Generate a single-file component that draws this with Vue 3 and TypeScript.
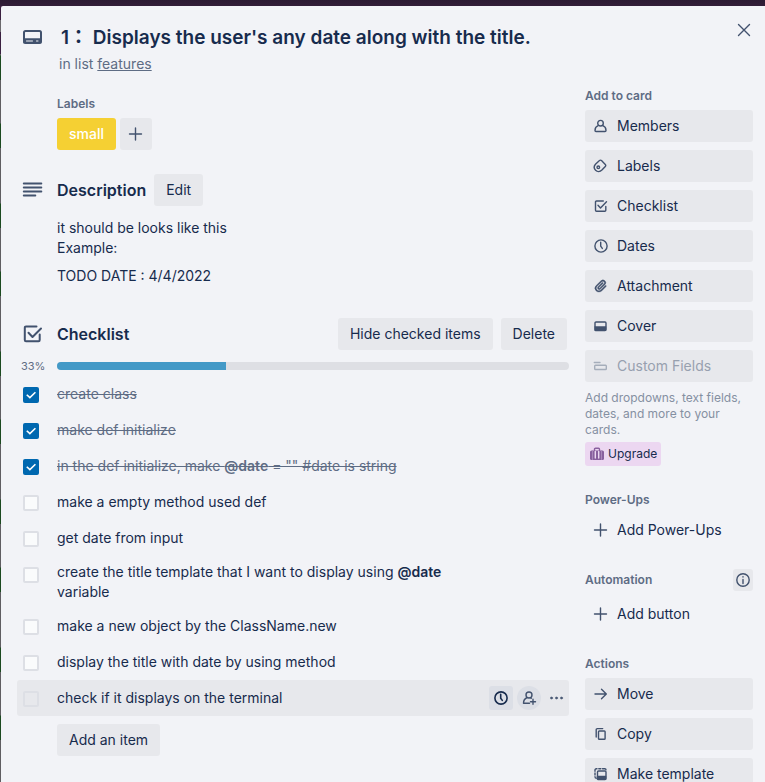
<script setup lang="ts">
import { ref, computed } from 'vue'

interface TextPart {
  text: string
  bold?: boolean
}

interface CheckItem {
  id: number
  parts: TextPart[]
  done: boolean
  active?: boolean
}

interface SideAction {
  icon: string
  label: string
  disabled?: boolean
}

const items = ref<CheckItem[]>([
  { id: 1, done: true, parts: [{ text: 'create class' }] },
  { id: 2, done: true, parts: [{ text: 'make def initialize' }] },
  {
    id: 3,
    done: true,
    parts: [
      { text: 'in the def initialize, make ' },
      { text: '@date', bold: true },
      { text: ' = "" #date is string' },
    ],
  },
  { id: 4, done: false, parts: [{ text: 'make a empty method used def' }] },
  { id: 5, done: false, parts: [{ text: 'get date from input' }] },
  {
    id: 6,
    done: false,
    parts: [
      { text: 'create the title template that I want to display using ' },
      { text: '@date', bold: true },
      { text: ' variable' },
    ],
  },
  { id: 7, done: false, parts: [{ text: 'make a new object by the ClassName.new' }] },
  { id: 8, done: false, parts: [{ text: 'display the title with date by using method' }] },
  { id: 9, done: false, active: true, parts: [{ text: 'check if it displays on the terminal' }] },
])

const percent = computed(() =>
  Math.round((items.value.filter((item) => item.done).length / items.value.length) * 100),
)

const addActions: SideAction[] = [
  { icon: 'member', label: 'Members' },
  { icon: 'label', label: 'Labels' },
  { icon: 'check', label: 'Checklist' },
  { icon: 'clock', label: 'Dates' },
  { icon: 'attachment', label: 'Attachment' },
  { icon: 'cover', label: 'Cover' },
  { icon: 'fields', label: 'Custom Fields', disabled: true },
]

const cardActions: SideAction[] = [
  { icon: 'arrow', label: 'Move' },
  { icon: 'copy', label: 'Copy' },
  { icon: 'template', label: 'Make template' },
]
</script>

<template>
  <div class="board">
    <svg class="defs" aria-hidden="true">
      <symbol id="i-member" viewBox="0 0 16 16">
        <circle cx="7.5" cy="5.2" r="2.8" />
        <path d="M5.1 7.6C3.2 8.4 2 10.3 2 12.4c0 .7.4 1.1 1 1.1h9c.6 0 1-.4 1-1.1 0-2.1-1.2-4-3.1-4.8" />
      </symbol>
      <symbol id="i-label" viewBox="0 0 16 16">
        <path d="M6.5 2.6c.6-.6 1.4-.6 2 0l3.8 3.9c.6.6.6 1.3 0 1.9L8.9 12c-1.9 1.9-4.6 1.9-6.3.2-1.7-1.7-1.7-4.3.1-6.2z" />
        <circle cx="5.3" cy="9.3" r="1.3" />
      </symbol>
      <symbol id="i-check" viewBox="0 0 16 16">
        <path d="M10.3 3H3.5c-.6 0-1 .4-1 1v8.3c0 .6.4 1 1 1h8.3c.6 0 1-.4 1-1V8.5" />
        <path d="M5 7.2l2.500 2.800L13.500 3.800" />
      </symbol>
      <symbol id="i-clock" viewBox="0 0 16 16">
        <circle cx="8" cy="8" r="6.1" />
        <path d="M7.7 4.3v3.9l1.6 2.2" />
      </symbol>
      <symbol id="i-attachment" viewBox="0 0 24 24">
        <path class="solid" d="M11.643 17.965c-1.53 1.495-4.016 1.496-5.542.004a3.773 3.773 0 0 1 .002-5.412l7.147-6.985a2.316 2.316 0 0 1 3.233-.003c.893.873.895 2.282.004 3.153l-6.703 6.55a.653.653 0 0 1-.914-.008.62.62 0 0 1 0-.902l6.229-6.087a.941.941 0 0 0 0-1.353.995.995 0 0 0-1.384 0l-6.23 6.087a2.502 2.502 0 0 0 0 3.607 2.643 2.643 0 0 0 3.683.009l6.703-6.55a4.074 4.074 0 0 0-.003-5.859 4.306 4.306 0 0 0-6.002.003l-7.148 6.985a5.655 5.655 0 0 0-.001 8.118c2.29 2.239 6.015 2.238 8.31-.005l6.686-6.533a.941.941 0 0 0 0-1.353.995.995 0 0 0-1.384 0z" />
      </symbol>
      <symbol id="i-cover" viewBox="0 0 16 16">
        <rect x="2" y="4" width="11" height="8.5" rx="1" />
        <path class="solid" d="M2 8.500h11v4H2z" />
      </symbol>
      <symbol id="i-fields" viewBox="0 0 16 16">
        <path d="M1.300 4.500H7" />
        <rect x="1.7" y="7.3" width="11.6" height="4.2" rx=".8" />
      </symbol>
      <symbol id="i-plus" viewBox="0 0 16 16">
        <path d="M7.500 2v12M1.500 8h12" />
      </symbol>
      <symbol id="i-arrow" viewBox="0 0 16 16">
        <path d="M2 8h11M8.500 3.200L13.300 8l-4.800 4.800" />
      </symbol>
      <symbol id="i-copy" viewBox="0 0 16 16">
        <rect x="5.5" y="5" width="6.600" height="8.300" rx=".8" />
        <path d="M3.200 11V3.700c0-.7.4-1.100 1.100-1.100h5.400" />
      </symbol>
      <symbol id="i-template" viewBox="0 0 16 16">
        <path d="M2 5.200V4c0-.7.5-1.200 1.200-1.200h.8M5.800 2.800h2M9.500 2.800h2.300c.7 0 1.200.4 1.200 1M2 7v2M2 10.800c0 .9.4 1.400 1.200 1.400" />
        <rect x="4.5" y="5" width="8.500" height="8.500" rx="1" />
        <path class="solid" d="M4.500 10h8.500v3.500h-8.500z" />
      </symbol>
      <symbol id="i-card" viewBox="0 0 24 24">
        <rect x="3" y="6" width="17" height="12" rx="1.5" />
        <path class="solid" d="M3 13.500h17V18H3z" />
        <path class="cut" d="M5.500 16h6M15.500 16h1.500" />
      </symbol>
      <symbol id="i-lines" viewBox="0 0 24 24">
        <path d="M2.800 5.500h17.500M2.800 9.500h17.500M2.800 13.500h17.500M2.800 17.500h11.500" />
      </symbol>
      <symbol id="i-bigcheck" viewBox="0 0 24 24">
        <path d="M15.500 4.500H5c-.8 0-1.200.4-1.200 1.200V18c0 .8.4 1.200 1.200 1.200h12.500c.8 0 1.200-.4 1.200-1.200v-5.500" />
        <path d="M7.500 10.800l4 4.200L20 6.500" />
      </symbol>
      <symbol id="i-close" viewBox="0 0 16 16">
        <path d="M2.500 2.500l11 11M13.500 2.500l-11 11" />
      </symbol>
      <symbol id="i-assign" viewBox="0 0 16 16">
        <circle cx="8" cy="5" r="3" />
        <path d="M6 7.500C3.800 8.600 2.500 10.600 2.500 13.200H8.500M9.500 7.800l.7.500M12 9.300v5M9.500 11.800h5" />
      </symbol>
      <symbol id="i-dots" viewBox="0 0 16 16">
        <circle class="solid" cx="2.500" cy="8" r="1.100" />
        <circle class="solid" cx="7.500" cy="8" r="1.100" />
        <circle class="solid" cx="12.500" cy="8" r="1.100" />
      </symbol>
      <symbol id="i-info" viewBox="0 0 16 16">
        <circle cx="8" cy="8" r="6.2" />
        <path d="M8 7.500v4M8 4.700v.4" />
      </symbol>
      <symbol id="i-case" viewBox="0 0 16 16">
        <rect class="leather" x="1" y="4.5" width="14" height="9.500" rx="1.5" />
        <path d="M5.500 4.500V3.200c0-.6.4-1 1-1h3c.6 0 1 .4 1 1v1.300" />
        <path class="seam" d="M6.300 5.500v6.500M9.700 5.500v6.500" />
        <path class="strap" d="M3.500 5v8.500M12.500 5v8.500" />
      </symbol>
    </svg>

    <div class="dialog" role="dialog" aria-labelledby="card-title">
      <header class="top">
        <svg class="icon big"><use href="#i-card" /></svg>
        <div class="heading">
          <h1 id="card-title">1： Displays the user's any date along with the title.</h1>
          <p>in list <a href="#features">features</a></p>
        </div>
        <button class="close" type="button" aria-label="Close">
          <svg class="icon"><use href="#i-close" /></svg>
        </button>
      </header>

      <div class="columns">
        <main class="content">
          <section class="labels">
            <h3>Labels</h3>
            <div class="label-row">
              <button class="chip" type="button">small</button>
              <button class="button square" type="button" aria-label="Add label">
                <svg class="icon"><use href="#i-plus" /></svg>
              </button>
            </div>
          </section>

          <section class="description">
            <div class="section-head">
              <svg class="icon big"><use href="#i-lines" /></svg>
              <h2>Description</h2>
              <button class="button" type="button">Edit</button>
            </div>
            <div class="prose">
              <p>it should be looks like this<br />Example:</p>
              <p>TODO DATE : 4/4/2022</p>
            </div>
          </section>

          <section class="checklist">
            <div class="section-head">
              <svg class="icon big"><use href="#i-bigcheck" /></svg>
              <h2>Checklist</h2>
              <div class="head-actions">
                <button class="button" type="button">Hide checked items</button>
                <button class="button" type="button">Delete</button>
              </div>
            </div>
            <div class="progress">
              <span class="percent">{{ percent }}%</span>
              <div class="track">
                <div class="fill" :style="{ width: percent + '%' }"></div>
              </div>
            </div>
            <ul>
              <li v-for="item in items" :key="item.id" :class="{ done: item.done, active: item.active }">
                <input :id="'item-' + item.id" v-model="item.done" type="checkbox" />
                <label :for="'item-' + item.id">
                  <span>
                    <template v-for="(part, i) in item.parts" :key="i">
                      <strong v-if="part.bold">{{ part.text }}</strong>
                      <template v-else>{{ part.text }}</template>
                    </template>
                  </span>
                </label>
                <div v-if="item.active" class="item-tools">
                  <button class="tool due" type="button" aria-label="Due date">
                    <svg class="icon"><use href="#i-clock" /></svg>
                  </button>
                  <button class="tool round" type="button" aria-label="Assign">
                    <svg class="icon"><use href="#i-assign" /></svg>
                  </button>
                  <button class="tool plain" type="button" aria-label="More">
                    <svg class="icon"><use href="#i-dots" /></svg>
                  </button>
                </div>
              </li>
            </ul>
            <button class="button add-item" type="button">Add an item</button>
          </section>
        </main>

        <aside class="sidebar">
          <section>
            <h3>Add to card</h3>
            <div class="stack">
              <button
                v-for="action in addActions"
                :key="action.label"
                class="side-button"
                type="button"
                :disabled="action.disabled"
              >
                <svg class="icon"><use :href="'#i-' + action.icon" /></svg>{{ action.label }}
              </button>
            </div>
            <p class="hint">Add dropdowns, text fields, dates, and more to your cards.</p>
            <button class="upgrade" type="button">
              <svg class="icon"><use href="#i-case" /></svg>Upgrade
            </button>
          </section>

          <section>
            <h3>Power-Ups</h3>
            <button class="side-button ghost" type="button">
              <svg class="icon"><use href="#i-plus" /></svg>Add Power-Ups
            </button>
          </section>

          <section>
            <div class="automation-head">
              <h3>Automation</h3>
              <button class="info" type="button" aria-label="About automation">
                <svg class="icon"><use href="#i-info" /></svg>
              </button>
            </div>
            <button class="side-button ghost" type="button">
              <svg class="icon"><use href="#i-plus" /></svg>Add button
            </button>
          </section>

          <section>
            <h3>Actions</h3>
            <div class="stack">
              <button v-for="action in cardActions" :key="action.label" class="side-button" type="button">
                <svg class="icon"><use :href="'#i-' + action.icon" /></svg>{{ action.label }}
              </button>
            </div>
          </section>
        </aside>
      </div>
    </div>
  </div>
</template>

<style>
body {
  margin: 0;
  overflow: hidden;
}
</style>

<style scoped>
.board {
  box-sizing: border-box;
  height: 100vh;
  overflow: hidden;
  padding: 6px 0 0 1px;
  background:
    linear-gradient(#2b1a32, #321d38) 0 0 / 100% 6px no-repeat,
    linear-gradient(#3a1f40 20px, #6b696d 20px 32px, #3a1f40 32px 54px, transparent 54px),
    repeating-linear-gradient(#5f5d61 0 55px, #1c4a20 56px 80px, #5f5d61 80px 123px, #1c4a20 124px 148px);
  background-color: #5f5d61;
  font-family: Inter, "Noto Sans CJK JP", sans-serif;
  font-size: 14px;
  line-height: 20px;
  color: #172b4d;
}

.defs {
  position: absolute;
  width: 0;
  height: 0;
}

.dialog {
  box-sizing: border-box;
  min-height: 100%;
  padding: 16px 12px 24px 16px;
  border-radius: 2px 0 0 0;
  background: #f2f3f7;
}

h1,
h2,
h3,
p,
ul {
  margin: 0;
  padding: 0;
}

button {
  border: 0;
  padding: 0;
  font: inherit;
  color: inherit;
  cursor: pointer;
}

.icon {
  display: block;
  flex: none;
  width: 16px;
  height: 16px;
  fill: none;
  stroke: #42526e;
  stroke-width: 1.4;
  stroke-linecap: round;
  stroke-linejoin: round;
}

.icon.big {
  width: 24px;
  height: 24px;
  margin: 0 12px 0 4px;
  stroke-width: 2;
}

.solid {
  fill: #42526e;
  stroke-width: 0.5px;
}

.cut {
  stroke: #f2f3f7;
  stroke-width: 1px;
}

.top {
  display: flex;
  align-items: flex-start;
}

.top .big {
  margin-top: 3px;
}

.heading {
  flex: 1;
  padding-top: 4px;
}

h1 {
  padding-left: 4px;
  font-size: 19px;
  line-height: 24px;
  font-weight: 600;
}

.heading p {
  padding: 4px 0 0 2px;
  color: #5e6c84;
}

.heading a {
  color: inherit;
}

.close {
  display: flex;
  padding: 0 1px;
  background: none;
}

.columns {
  display: flex;
  align-items: flex-start;
  gap: 16px;
  padding-top: 12px;
}

.content {
  flex: 1;
  min-width: 0;
}

h3 {
  font-size: 12px;
  line-height: 20px;
  font-weight: 600;
  color: #5e6c84;
}

.labels {
  padding: 8px 0 0 40px;
}

.label-row {
  display: flex;
  gap: 4px;
  padding-top: 4px;
}

.chip,
.button {
  height: 32px;
  padding: 0 12px;
  border-radius: 3px;
}

.chip {
  background: #f5d033;
  color: #fff;
  font-weight: 500;
}

.button {
  background: #e7e8ec;
}

.square {
  padding: 0 8px;
}

.section-head {
  display: flex;
  align-items: center;
}

h2 {
  font-size: 16px;
  line-height: 20px;
  font-weight: 600;
}

.description {
  padding-top: 24px;
}

.description .button {
  margin-left: 8px;
}

.prose {
  display: grid;
  gap: 8px;
  padding: 12px 0 0 40px;
}

.checklist {
  padding-top: 32px;
}

.head-actions {
  display: flex;
  gap: 8px;
  margin-left: auto;
  padding-right: 2px;
}

.progress {
  display: flex;
  align-items: center;
  padding: 8px 0 2px;
}

.percent {
  width: 40px;
  box-sizing: border-box;
  padding-left: 4px;
  font-size: 11px;
  line-height: 16px;
  color: #5e6c84;
}

.track {
  flex: 1;
  height: 8px;
  overflow: hidden;
  border-radius: 4px;
  background: #dedfe4;
}

.fill {
  height: 100%;
  background: #4399c7;
}

li {
  display: flex;
  align-items: flex-start;
  border-radius: 3px;
}

li.active {
  background: #e7e8ec;
}

li input {
  appearance: none;
  flex: none;
  box-sizing: border-box;
  display: grid;
  place-items: center;
  width: 16px;
  height: 16px;
  margin: 11px 18px 0 6px;
  border: 2px solid #dddfe5;
  border-radius: 2px;
  background: #fafbfc;
}

li.active input {
  background: transparent;
}

li input:checked {
  border: 0;
  background: #0068b0;
}

li input:checked::after {
  content: "";
  width: 16px;
  height: 16px;
  background: #fff;
  clip-path: polygon(20% 52%, 27% 45%, 43% 60%, 74% 29%, 81% 36%, 43% 74%);
}

li label {
  display: flex;
  flex: 1;
  align-items: center;
  max-width: 400px;
  min-height: 24px;
  padding: 6px 0;
}

strong {
  font-weight: 600;
}

li.done label {
  color: #5e6c84;
  text-decoration: line-through;
}

.item-tools {
  display: flex;
  gap: 4px;
  margin-left: auto;
  padding: 6px 0;
}

.tool {
  display: grid;
  place-items: center;
  width: 24px;
  height: 24px;
  border-radius: 3px;
  background: #dcdfe6;
}

.tool.round {
  border-radius: 50%;
}

.tool.plain {
  background: none;
}

.due .icon {
  stroke: #172b4d;
  stroke-width: 1.6;
}

.add-item {
  margin: 8px 0 0 40px;
}

.sidebar {
  display: grid;
  flex: none;
  gap: 24px;
  width: 168px;
}

.stack {
  display: grid;
  gap: 8px;
}

.side-button {
  display: flex;
  align-items: center;
  gap: 8px;
  width: 100%;
  height: 32px;
  padding: 0 8px;
  border-radius: 3px;
  background: #e7e8ec;
  text-align: left;
}

.sidebar h3 {
  margin-bottom: 4px;
}

.side-button.ghost {
  background: none;
}

.side-button:disabled {
  color: #97a0af;
}

.side-button:disabled .icon {
  stroke: #a5adba;
}

.hint {
  padding: 8px 0 4px;
  font-size: 12px;
  line-height: 16px;
  color: #8590a2;
}

.upgrade {
  display: flex;
  align-items: center;
  gap: 3px;
  height: 24px;
  padding: 0 4px;
  border-radius: 3px;
  background: #ecd7f1;
  font-size: 12px;
}

.upgrade .icon {
  stroke: #89609e;
}

.leather {
  fill: #89609e;
  stroke: none;
}

.seam {
  stroke: #ecd7f1;
  stroke-width: 1.4px;
}

.strap {
  stroke: #a987ba;
  stroke-width: 1px;
}

.automation-head {
  display: flex;
  align-items: center;
  justify-content: space-between;
  height: 20px;
  margin-bottom: 8px;
}

.automation-head h3 {
  margin: 0;
}

.info {
  display: grid;
  place-items: center;
  width: 20px;
  height: 22px;
  border-radius: 3px;
  background: #e7e8ec;
}
</style>
